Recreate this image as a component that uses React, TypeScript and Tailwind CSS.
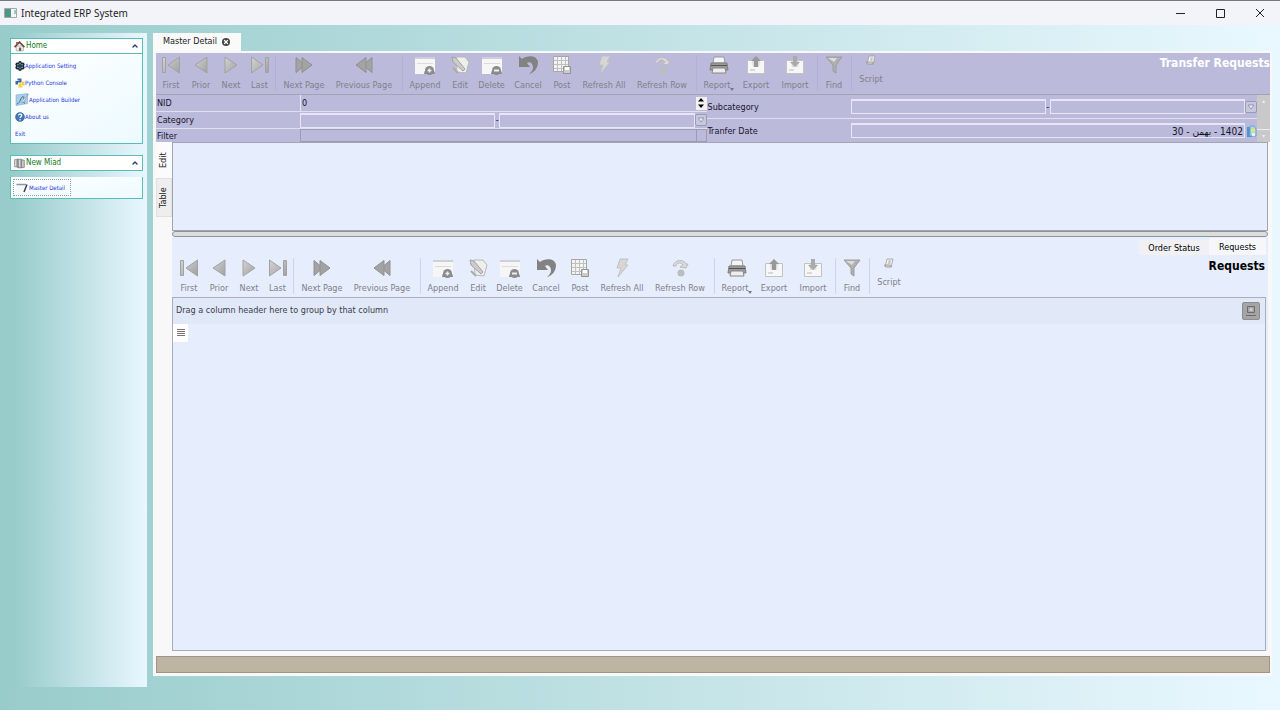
import type {ReactNode} from 'react'
import {ChevronUp, Settings, X} from 'lucide-react'

type IconName =
  | 'first'
  | 'prior'
  | 'next'
  | 'last'
  | 'nextPage'
  | 'prevPage'
  | 'append'
  | 'edit'
  | 'delete'
  | 'cancel'
  | 'post'
  | 'refreshAll'
  | 'refreshRow'
  | 'report'
  | 'export'
  | 'import'
  | 'find'
  | 'script'

interface Tool {
  label: string
  icon: IconName
  width: string
}

const toolGroups: {tools: Tool[]; gap: string}[] = [
  {
    tools: [
      {label: 'First', icon: 'first', width: 'w-[30px]'},
      {label: 'Prior', icon: 'prior', width: 'w-[30px]'},
      {label: 'Next', icon: 'next', width: 'w-[30px]'},
      {label: 'Last', icon: 'last', width: 'w-[27px]'},
    ],
    gap: 'w-[5px]',
  },
  {
    tools: [
      {label: 'Next Page', icon: 'nextPage', width: 'w-[52px]'},
      {label: 'Previous Page', icon: 'prevPage', width: 'w-[68px]'},
    ],
    gap: 'w-[9px]',
  },
  {
    tools: [
      {label: 'Append', icon: 'append', width: 'w-[36px]'},
      {label: 'Edit', icon: 'edit', width: 'w-[34px]'},
      {label: 'Delete', icon: 'delete', width: 'w-[29px]'},
      {label: 'Cancel', icon: 'cancel', width: 'w-[44px]'},
      {label: 'Post', icon: 'post', width: 'w-[24px]'},
      {label: 'Refresh All', icon: 'refreshAll', width: 'w-[60px]'},
      {label: 'Refresh Row', icon: 'refreshRow', width: 'w-[56px]'},
    ],
    gap: 'w-[13px]',
  },
  {
    tools: [
      {label: 'Report', icon: 'report', width: 'w-[32px]'},
      {label: 'Export', icon: 'export', width: 'w-[42px]'},
      {label: 'Import', icon: 'import', width: 'w-[36px]'},
    ],
    gap: 'w-[8px]',
  },
  {tools: [{label: 'Find', icon: 'find', width: 'w-[26px]'}], gap: 'w-[8px]'},
  {tools: [{label: 'Script', icon: 'script', width: 'w-[32px]'}], gap: ''},
]

const windowArt = (
  <>
    <path d="M0 2h20v17H0z" fill="#f6f6f6" />
    <path d="M0 2h20v2H0z" fill="#cfcfd4" />
    <path d="M2 8h16v1H2z" fill="#dcdcdc" />
    <path d="M9 19a5.500 5.500 0 0 1 11 0z" fill="#8b8b8b" />
    <circle cx="14.500" cy="15.500" r="4.500" fill="#8b8b8b" />
  </>
)

const trayArt = (
  <>
    <path d="M1.500 5.500h17v13h-17z" fill="#f7f7f7" stroke="#c2c2c2" />
    <path d="M4 15h5" stroke="#bbb" />
    <path d="M6 6h8l-1 6H7z" fill="#ddd" />
  </>
)

const art: Record<IconName, ReactNode> = {
  first: (
    <g fill="url(#metal)" stroke="#a2a2a2">
      <path d="M1.500 2.500h3v15h-3zM18.500 2v16L7 10z" />
    </g>
  ),
  prior: <path d="M16 2v16L4 10z" fill="url(#metal)" stroke="#a2a2a2" />,
  next: <path d="M4 2v16l12-8z" fill="url(#metal)" stroke="#a2a2a2" />,
  last: (
    <g fill="url(#metal)" stroke="#a2a2a2">
      <path d="M15.500 2.500h3v15h-3zM1.500 2v16L13 10z" />
    </g>
  ),
  nextPage: (
    <g fill="#a3a3a3" stroke="#909090">
      <path d="M2 2.500v15l9-7.500z" />
      <path d="M8 2.500v15l10-7.500z" />
    </g>
  ),
  prevPage: (
    <g fill="#a3a3a3" stroke="#909090">
      <path d="M18 2.500v15L9 10z" />
      <path d="M12 2.500v15L2 10z" />
    </g>
  ),
  append: (
    <>
      {windowArt}
      <path d="M12.500 15.500h4M14.500 13.500v4" stroke="#eee" strokeWidth="1.500" />
    </>
  ),
  edit: (
    <>
      <path d="M6 2h9l4 5-3 11-9-1z" fill="#eeeeea" stroke="#b8b8b8" />
      <path d="M2 2l4 1 9 11-2 2L3 7z" fill="#cccccc" stroke="#a2a2a2" />
      <path d="M3 13l5 5" stroke="#aaa" strokeWidth="2" />
    </>
  ),
  delete: (
    <>
      {windowArt}
      <path d="M12 15.500h5" stroke="#eee" strokeWidth="2" />
    </>
  ),
  cancel: (
    <path
      d="M1 1l3 3C9 0 19 0 20 7c0 6-4 11-9 12 4-3 5-7 3-10-1-2-4-2-5-1l3 4L1 12z"
      fill="#828282"
    />
  ),
  post: (
    <>
      <path d="M1.500 1.500h15v15h-15z" fill="#f3f3f3" stroke="#a6a6a6" />
      <path d="M2 5.500h14M2 9.500h14M2 13.500h14M5.500 2v14M9.500 2v14M13.500 2v14" stroke="#c0c0c0" />
      <path d="M11.500 11.500h7v7h-7z" fill="#ccc" stroke="#949494" />
      <path d="M13 12h4v3h-4z" fill="#fff" />
    </>
  ),
  refreshAll: <path d="M8 1h8l-3 6h3L6 19l3-9H5z" fill="#d6d6d6" stroke="#c2c2c2" />,
  refreshRow: (
    <>
      <path d="M3 8C5 1 14 1 16 6h2l-2 4-6-1 3-2C11 4 7 4 6 8z" fill="#d9d9d9" stroke="#bbb" />
      <circle cx="11" cy="15" r="3.500" fill="#bdbdbd" />
    </>
  ),
  report: (
    <>
      <path d="M5 2h10l1 6H4z" fill="#f5f5f5" stroke="#999" />
      <path d="M2 8h16l1 7H1z" fill="#9a9a9a" stroke="#808080" />
      <path d="M2 10.500h16" stroke="#555" />
      <path d="M4 13h12l1 5H3z" fill="#eee" stroke="#888" />
    </>
  ),
  export: (
    <>
      {trayArt}
      <path d="M8 12V6H5l5-5 5 5h-3v6z" fill="#989898" />
    </>
  ),
  import: (
    <>
      {trayArt}
      <path d="M8 1v6H5l5 5 5-5h-3V1z" fill="#aaa" />
    </>
  ),
  find: (
    <>
      <path d="M2 2h16l-6 8v8l-3-2v-6z" fill="#b0b0b0" stroke="#9c9c9c" />
      <path d="M4 3h9l-3 4z" fill="#dcdcdc" />
    </>
  ),
  script: (
    <>
      <path d="M6 2h12l-3 13H3z" fill="#f2f2f2" stroke="#999" strokeWidth="1.500" />
      <path d="M1 14h12l2 4H3z" fill="#ddd" stroke="#888" strokeWidth="1.500" />
      <path d="M9 6h5M8 10h5" stroke="#888" strokeWidth="1.500" />
    </>
  ),
}

function ToolIcon({name}: {name: IconName}) {
  return (
    <svg
      viewBox="0 0 20 20"
      className={name === 'script' ? 'mb-1 size-[10px]' : 'size-5'}
      aria-hidden="true"
    >
      {art[name]}
    </svg>
  )
}

function Toolbar({
  title,
  titleClass,
  className,
}: {
  title: string
  titleClass: string
  className: string
}) {
  return (
    <div className={`flex items-start ${className}`}>
      {toolGroups.map((group, i) => (
        <div key={i} className="flex h-full">
          {group.tools.map((tool) => (
            <button
              key={tool.label}
              type="button"
              className={`${tool.width} flex flex-col items-center gap-[3px] text-[9px] leading-[14px] text-[#808089] whitespace-nowrap`}
            >
              <ToolIcon name={tool.icon} />
              <span className="flex items-end">
                {tool.label}
                {tool.label === 'Report' && (
                  <svg viewBox="0 0 4 4" className="mb-px size-1" aria-hidden="true">
                    <path d="M0 1h4L2 4z" fill="#777" />
                  </svg>
                )}
              </span>
            </button>
          ))}
          {group.gap && (
            <span className={`${group.gap} flex justify-center pb-[3px]`}>
              <span className="w-px bg-[#9c9cc0]/30" />
            </span>
          )}
        </div>
      ))}
      <h2 className={`ml-auto text-[12px] leading-4 font-bold ${titleClass}`}>{title}</h2>
    </div>
  )
}

function DropButton({label}: {label: string}) {
  return (
    <button
      type="button"
      aria-label={label}
      className="flex size-3 shrink-0 items-center justify-center rounded-xs border border-[#9999b8] bg-[#c8c8dc]"
    >
      <svg viewBox="0 0 6 6" className="size-[6px]" aria-hidden="true">
        <path d="M0 1l3 4 3-4z" fill="#eef" stroke="#9494b4" />
      </svg>
    </button>
  )
}

const fieldClass =
  'h-[15px] min-w-0 flex-1 border border-t-2 border-[#e6e6f8] bg-[#bcbadb] px-px text-[10px] leading-[11px]'

function LookupField({id, label}: {id: string; label: string}) {
  return (
    <>
      <input id={id} className={fieldClass} />
      <span className="w-1 text-center">-</span>
      <input aria-label={`${label} name`} className={fieldClass} />
      <DropButton label={`Open ${label}`} />
    </>
  )
}

function FormRow({
  id,
  label,
  rowClass,
  children,
}: {
  id: string
  label: string
  rowClass: string
  children: ReactNode
}) {
  return (
    <div className={`flex items-center border-b border-[#dfdff0] ${rowClass}`}>
      <label htmlFor={id} className="w-36 shrink-0 pl-px">
        {label}
      </label>
      {children}
    </div>
  )
}

function TransferForm() {
  return (
    <form className="flex border-t border-[#a4a4b8] bg-[#bcbadb] text-[9px] leading-[14px] text-[#15152c]">
      <div className="min-w-0 flex-1">
        <FormRow id="nid" label="NID" rowClass="h-[17px]">
          <input
            id="nid"
            defaultValue="0"
            className="h-4 min-w-0 flex-1 border-l border-[#e6e6f8] px-px"
          />
          <button
            type="button"
            aria-label="Change NID"
            className="flex h-[13px] w-[11px] items-center justify-center bg-[#f1f1f1]"
          >
            <svg viewBox="0 0 8 12" className="h-3 w-2" aria-hidden="true">
              <path d="M1 4.500L4 1l3 3.500zM1 7.500L4 11l3-3.500z" fill="#000" />
            </svg>
          </button>
        </FormRow>
        <FormRow id="category" label="Category" rowClass="h-[17px]">
          <LookupField id="category" label="category" />
        </FormRow>
        <div className="flex h-[13px] items-center">
          <label htmlFor="filter" className="w-36 shrink-0 pl-px">
            Filter
          </label>
          <input id="filter" className="h-[13px] min-w-0 flex-1 border border-[#9c9cb4]" />
          <span className="h-[13px] w-[10px] border-y border-r border-[#9c9cb4]" />
        </div>
      </div>
      <div className="min-w-0 flex-1">
        <FormRow id="subcategory" label="Subcategory" rowClass="h-[24px]">
          <LookupField id="subcategory" label="subcategory" />
        </FormRow>
        <div className="flex h-[23px] items-center">
          <label htmlFor="date" className="w-36 shrink-0 pl-px">
            Tranfer Date
          </label>
          <input id="date" dir="rtl" defaultValue="1402 - بهمن - 30" className={fieldClass} />
          <button type="button" aria-label="Pick date" className="size-3">
            <svg viewBox="0 0 12 12" aria-hidden="true">
              <path d="M2 2h5v10H2z" fill="#4d96c9" />
              <path d="M5 1h4l2 3v7H5z" fill="#a5dce6" stroke="#74a0c8" />
              <path d="M6 4h4v3H6z" fill="#e9e36c" />
              <path d="M7 8h3v3H7z" fill="#dff3ff" />
            </svg>
          </button>
        </div>
      </div>
      <div className="flex w-[13px] flex-col justify-between bg-[#c9c9cc] text-center text-[6px] leading-[12px] text-[#eee]">
        <span>▴</span>
        <span className="border-t border-[#eee]">▾</span>
      </div>
    </form>
  )
}

function CardHeader({icon, title}: {icon: ReactNode; title: string}) {
  return (
    <h2 className="flex h-4 items-center border border-[#5abdb9] bg-white pl-[3px] text-[8px] text-[#14781c]">
      {icon}
      <span className="ml-px flex-1">{title}</span>
      <button type="button" aria-label={`Collapse ${title}`} className="mr-[3px]">
        <ChevronUp className="size-2 text-[#203a78]" strokeWidth={4} />
      </button>
    </h2>
  )
}

const pythonIcon = (
  <svg viewBox="0 0 20 20" className="size-[10px]" aria-hidden="true">
    <path d="M5 1h8v8H6v4H1V6h8V5H5z" fill="#39699a" />
    <path d="M15 19H7v-8h7V7h5v8h-8v1h4z" fill="#f3cc45" />
  </svg>
)

const builderIcon = (
  <svg viewBox="0 0 28 26" className="h-[13px] w-[14px]" aria-hidden="true">
    <path d="M2 4L25 1v20L2 25z" fill="#a9d0ea" stroke="#6f9fc5" />
    <path d="M4 22c6-1 8-15 12-15s-1 14 4 14" fill="none" stroke="#416d99" strokeWidth="2" />
    <path d="M27 2L15 15l-2 5 5-3z" fill="#e9eef2" stroke="#7b8b9b" />
  </svg>
)

const aboutIcon = (
  <svg viewBox="0 0 20 20" className="size-[10px]" aria-hidden="true">
    <circle cx="10" cy="10" r="9" fill="#4277b3" stroke="#27578c" />
    <path d="M7 7c1-5 8-3 6 1-1 2-3 2-3 4" fill="none" stroke="#fff" strokeWidth="2.500" />
    <circle cx="10" cy="15.500" r="1.500" fill="#fff" />
  </svg>
)

const homeLinks = [
  {
    label: 'Application Setting',
    icon: <Settings className="size-[10px] text-[#10283a]" strokeWidth={4} />,
  },
  {label: 'Python Console', icon: pythonIcon},
  {label: 'Application Builder', icon: builderIcon},
  {label: 'About us', icon: aboutIcon},
  {label: 'Exit', icon: null},
]

function Sidebar() {
  return (
    <nav
      aria-label="Navigation"
      className="mb-[23px] w-[147px] shrink-0 bg-linear-to-r from-[#98cccb] from-10% to-[#e9f7ff] pt-[5px] pr-1 pl-[10px]"
    >
      <CardHeader
        title="Home"
        icon={
          <svg viewBox="0 0 20 20" className="size-[11px]" aria-hidden="true">
            <path d="M4 9h13v9H4z" fill="#eee" stroke="#8a8a8a" />
            <path d="M1 11l9-9 9 9" fill="none" stroke="#754338" strokeWidth="3" />
            <path d="M4 2h3v5H4z" fill="#8b5547" />
            <path d="M9 12h4v6H9z" fill="#7a5b49" />
          </svg>
        }
      />
      <ul className="border border-t-0 border-[#5abdb9] bg-linear-to-br from-white to-[#ecfaff] pt-[3px] pb-px pl-[3px]">
        {homeLinks.map((link) => (
          <li key={link.label}>
            <a
              href="#"
              className="flex h-[17px] items-center pl-px text-[6px] whitespace-nowrap text-[#1a35e0]"
            >
              {link.icon}
              <span>{link.label}</span>
            </a>
          </li>
        ))}
      </ul>
      <div className="mt-[11px]">
        <CardHeader
          title="New Miad"
          icon={
            <svg viewBox="0 0 20 20" className="size-[11px]" aria-hidden="true">
              <path d="M1 3l6-1v15l-6-1zM7 2h7v16H7zM14 3l5 1v13l-5 1z" fill="#aaa" stroke="#777" />
              <path d="M3 4v11M10 3v13M16 5v11" stroke="#ddd" strokeWidth="2" />
            </svg>
          }
        />
      </div>
      <div className="mt-[6px] border border-t-0 border-[#5abdb9] bg-linear-to-br from-white to-[#ecfaff] py-[2px] pl-[2px]">
        <a
          href="#"
          className="flex h-[17px] w-[58px] items-center gap-px border border-dotted border-[#8c9da9] pl-[2px] text-[6px] whitespace-nowrap text-[#1a35e0]"
        >
          <svg viewBox="0 0 24 20" className="h-[10px] w-3 shrink-0" aria-hidden="true">
            <path d="M1 3h19v14H1z" fill="#f5f7fa" />
            <path d="M1 3h19" stroke="#8796a5" strokeWidth="3" />
            <path d="M22 3l-6 15" stroke="#39424c" strokeWidth="3" />
          </svg>
          Master Detail
        </a>
      </div>
    </nav>
  )
}

function TitleBar() {
  return (
    <header className="flex h-[25px] items-center border-t border-[#777780] bg-[#f3f3fa] pl-1 text-[#1f1f26]">
      <svg viewBox="0 0 13 12" className="h-3 w-[13px]" aria-hidden="true">
        <path d="M.5 1.500h12v9H.5z" fill="#f5f5f5" stroke="#a7a7a7" />
        <path d="M1 2h6v8H1z" fill="#4d9787" />
        <path d="M11 3v4" stroke="#4d9787" />
      </svg>
      <h1 className="ml-1 font-['Noto_Sans',sans-serif] text-[10px]">Integrated ERP System</h1>
      <div className="ml-auto flex">
        <button type="button" aria-label="Minimize" className="flex w-10 justify-center">
          <svg viewBox="0 0 10 10" className="size-[10px]" aria-hidden="true">
            <path d="M1 5.500h9" stroke="#222" />
          </svg>
        </button>
        <button type="button" aria-label="Maximize" className="flex w-10 justify-center">
          <svg viewBox="0 0 10 10" className="size-[10px]" aria-hidden="true">
            <path d="M1.500 1.500h8v8h-8z" fill="none" stroke="#222" />
          </svg>
        </button>
        <button type="button" aria-label="Close" className="flex w-10 justify-center">
          <svg viewBox="0 0 10 10" className="size-[10px]" aria-hidden="true">
            <path d="M1 1l8 8M9 1L1 9" stroke="#222" />
          </svg>
        </button>
      </div>
    </header>
  )
}

function RequestsPanel() {
  return (
    <section className="flex flex-1 flex-col bg-[#e6edfd] pt-px pr-[2px]">
      <div role="tablist" className="flex h-[17px] justify-end text-[9px] leading-[14px]">
        <button
          type="button"
          role="tab"
          aria-selected="false"
          className="mt-[2px] w-[70px] bg-[#f1f1f5]"
        >
          Order Status
        </button>
        <button type="button" role="tab" aria-selected="true" className="w-[57px] bg-[#f7f7fb]">
          Requests
        </button>
      </div>
      <div className="pl-[2px]">
        <Toolbar title="Requests" titleClass="text-black pr-px" className="h-[42px] pt-[3px]" />
      </div>
      <div className="flex flex-1 flex-col border border-[#abaeba]">
        <div className="flex h-[26px] items-center justify-between bg-[#e1e8f7] pr-[5px] pl-[3px] text-[9px] text-[#3c404c]">
          Drag a column header here to group by that column
          <button
            type="button"
            aria-label="Customize grid"
            className="flex size-[18px] items-center justify-center rounded-xs border border-[#8d8d8d] bg-[#a5a5a5]"
          >
            <svg viewBox="0 0 12 12" className="size-3" aria-hidden="true">
              <path d="M2.500 1.500h7v6h-7zM1 10.500h10" fill="none" stroke="#6c6c6c" />
              <circle cx="6" cy="4.500" r="1.500" fill="#d0d0d0" />
            </svg>
          </button>
        </div>
        <button
          type="button"
          aria-label="Select columns"
          className="flex h-[18px] w-[15px] items-center justify-center bg-white"
        >
          <svg viewBox="0 0 8 8" className="size-2" aria-hidden="true">
            <path d="M0 .5h8M0 2.500h8M0 4.500h8M0 6.500h8" stroke="#77736c" />
          </svg>
        </button>
      </div>
    </section>
  )
}

export default function App() {
  return (
    <div className="flex min-h-screen flex-col bg-linear-to-r from-[#98cccb] to-[#e9f8ff] font-['DejaVu_Sans_Condensed','DejaVu_Sans',sans-serif]">
      <svg className="absolute size-0" aria-hidden="true">
        <linearGradient id="metal" x1="0" x2="1" y1="0" y2="1">
          <stop offset="0" stopColor="#d4d4d4" />
          <stop offset="1" stopColor="#a0a0a0" />
        </linearGradient>
      </svg>
      <TitleBar />
      <div className="flex flex-1 pt-2">
        <Sidebar />
        <main className="mr-2 mb-[34px] ml-[6px] flex min-w-0 flex-1 flex-col">
          <div className="flex h-[18px] w-[88px] items-center bg-[#fafafa] pl-[10px] text-[9px] whitespace-nowrap text-[#222]">
            Master Detail
            <button
              type="button"
              aria-label="Close tab"
              className="ml-[5px] rounded-full bg-[#444] p-px text-white"
            >
              <X className="size-[6px]" strokeWidth={5} />
            </button>
          </div>
          <div className="flex flex-1 flex-col bg-[#f8f8f8] pt-[2px] pr-[2px] pb-[3px] pl-[3px]">
            <div className="bg-[#bcbadb]">
              <Toolbar
                title="Transfer Requests"
                titleClass="text-white"
                className="h-[41px] pt-[2px]"
              />
            </div>
            <TransferForm />
            <div className="flex flex-1">
              <div role="tablist" className="w-4 shrink-0 text-[9px] text-[#222]">
                <button
                  type="button"
                  role="tab"
                  aria-selected="true"
                  className="flex h-9 w-4 rotate-180 items-center justify-center bg-[#fbfbfb] [writing-mode:vertical-rl]"
                >
                  Edit
                </button>
                <button
                  type="button"
                  role="tab"
                  aria-selected="false"
                  className="flex h-[39px] w-4 rotate-180 items-center justify-center border border-[#e0e0e0] bg-[#eeeeee] [writing-mode:vertical-rl]"
                >
                  Table
                </button>
              </div>
              <div className="flex min-w-0 flex-1 flex-col pr-[2px]">
                <div className="h-[89px] border border-[#a2a5b0] bg-[#e6edfd]" />
                <div className="h-[6px] rounded-full border border-[#8f929b] bg-[#dcded9]" />
                <RequestsPanel />
              </div>
            </div>
            <footer className="mt-[5px] h-[17px] border border-[#9d9686] bg-[#bdb5a2]" />
          </div>
        </main>
      </div>
    </div>
  )
}
